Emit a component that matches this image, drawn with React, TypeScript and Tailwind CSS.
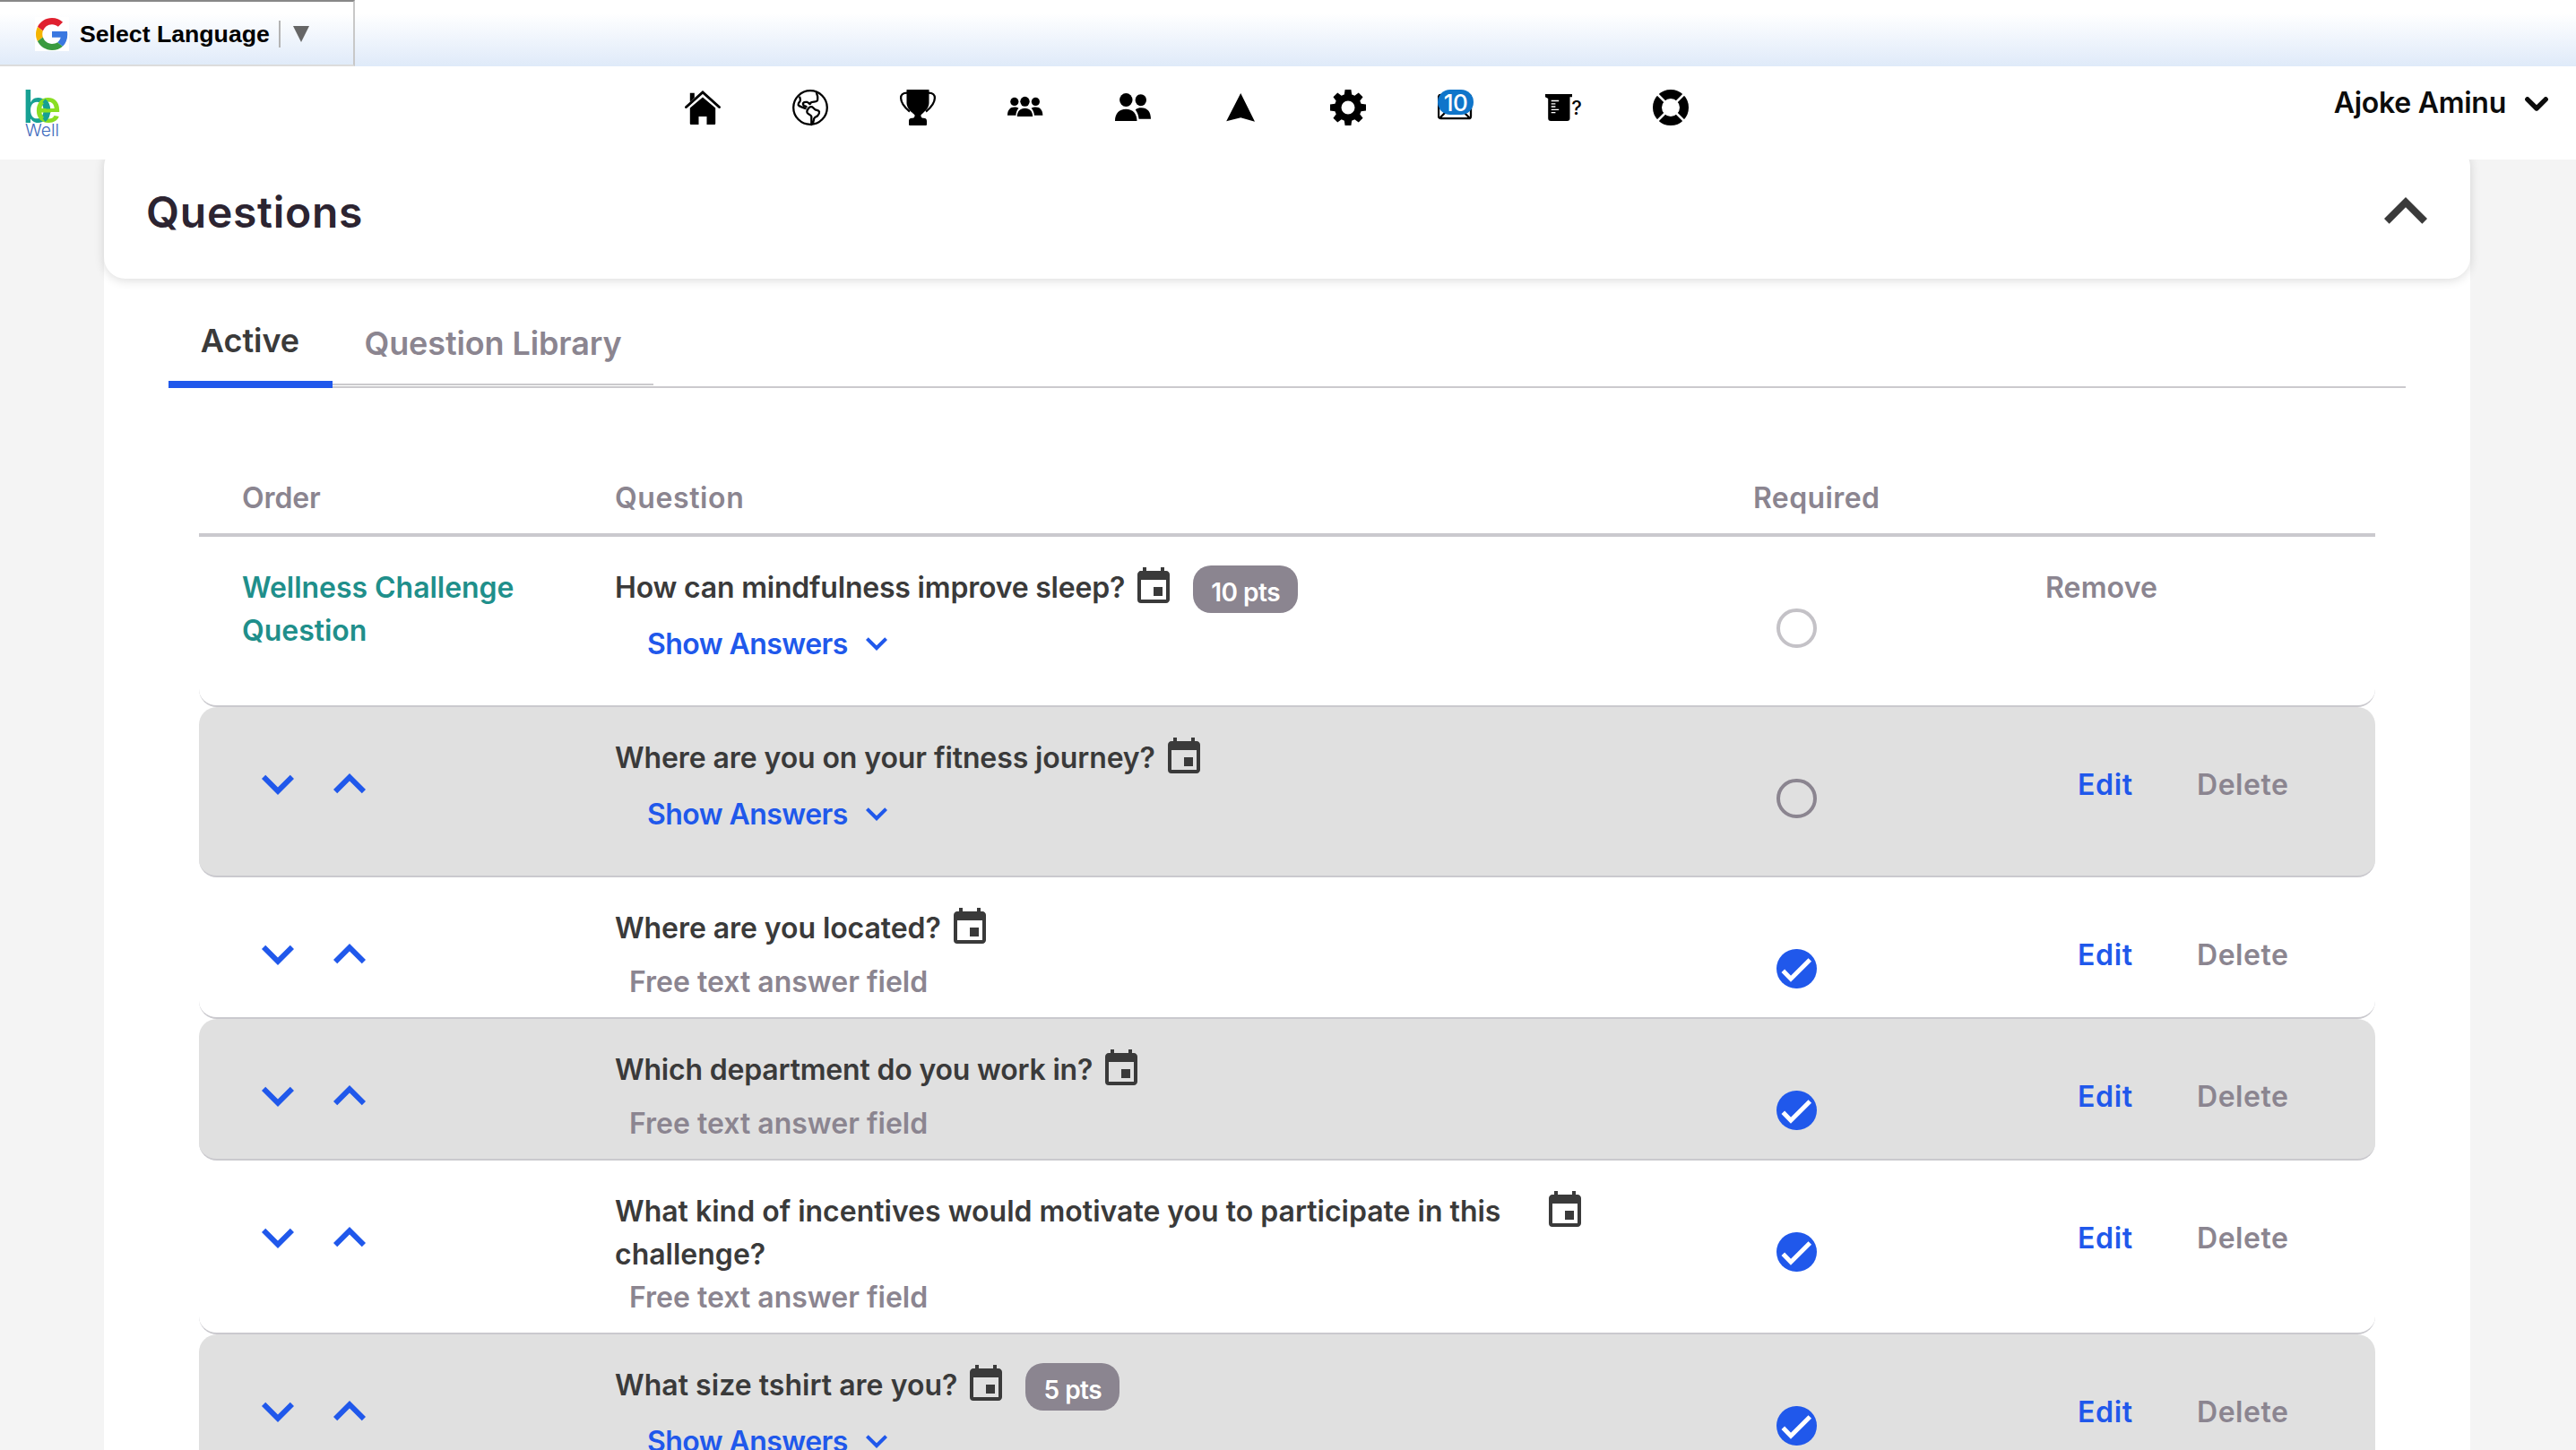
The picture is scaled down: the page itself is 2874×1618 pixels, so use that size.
import type { ReactNode } from "react";
import { MdEvent, MdKeyboardArrowDown, MdKeyboardArrowUp } from "react-icons/md";

type Question = {
  text: string;
  tracking: string;
  height: string;
  shaded?: boolean;
  challenge?: boolean;
  freeText?: boolean;
  required?: boolean;
  points?: string;
};

const questions: Question[] = [
  { text: "How can mindfulness improve sleep?", tracking: "tracking-[-0.2px]", height: "h-[190px]", challenge: true, points: "10 pts" },
  { text: "Where are you on your fitness journey?", tracking: "tracking-[-0.1px]", height: "h-[190px]", shaded: true },
  { text: "Where are you located?", tracking: "tracking-[-0.07px]", height: "h-[158px]", freeText: true, required: true },
  { text: "Which department do you work in?", tracking: "tracking-[-0.19px]", height: "h-[158px]", shaded: true, freeText: true, required: true },
  {
    text: "What kind of incentives would motivate you to participate in this challenge?",
    tracking: "tracking-[0px]",
    height: "h-[194px]",
    freeText: true,
    required: true,
  },
  { text: "What size tshirt are you?", tracking: "tracking-[0.03px]", height: "h-[190px]", shaded: true, required: true, points: "5 pts" },
];

const NavIcon = ({ children }: { children: ReactNode }) => (
  <a href="#" className="block size-10">
    <svg viewBox="0 0 40 40" className="size-10 overflow-visible" fill="#000">
      {children}
    </svg>
  </a>
);

const GoogleLogo = () => (
  <svg viewBox="0 0 48 48" className="size-9">
    <path fill="#e0202f" d="M24 9.5c3.5 0 6.700 1.200 9.200 3.600l6.900-6.900C35.900 2.400 30.500 0 24 0 14.600 0 6.500 5.400 2.600 13.200l8 6.200C12.400 13.700 17.700 9.500 24 9.500z" />
    <path fill="#3b78e0" d="M47 24.500c0-1.600-.2-3.100-.4-4.500H24v9h12.900c-.6 3-2.200 5.500-4.700 7.200l7.700 6C44.400 38 47 31.800 47 24.500z" />
    <path fill="#f4b400" d="M10.500 28.600c-.5-1.500-.8-3-.8-4.600s.3-3.100.8-4.600l-8-6.200C.9 16.500 0 20.100 0 24s.9 7.500 2.600 10.800l7.900-6.200z" />
    <path fill="#3a9a3f" d="M24 48c6.500 0 11.900-2.100 15.900-5.800l-7.700-6c-2.200 1.400-4.900 2.300-8.200 2.300-6.300 0-11.600-4.200-13.500-9.900l-8 6.200C6.500 42.600 14.600 48 24 48z" />
  </svg>
);

const BeWellLogo = () => (
  <svg width="60" height="68" viewBox="-8 -8 60 68" className="overflow-visible font-['Inter',sans-serif]">
    <text y="38" fontSize="51" fontWeight="500">
      <tspan x="-3" fill="#17a093">b</tspan>
      <tspan x="10.500" fill="#8ade22">e</tspan>
    </text>
    <path d="M21 13.200c6.500 5 6.500 17 0 21.800" fill="none" stroke="#17a093" strokeWidth="4.800" />
    <path d="M15 24.500h14" stroke="#8ade22" strokeWidth="4" />
    <text x="0" y="53" fontSize="19" fontWeight="300" fill="#3f6bbd" textLength="38" lengthAdjust="spacingAndGlyphs">Well</text>
  </svg>
);

const LanguageBar = () => (
  <div className="flex h-[74px] shrink-0 bg-gradient-to-b from-white from-20% to-[#dfeaf9]">
    <button className="flex h-[74px] w-[396px] items-center border-t-2 border-r-2 border-b-2 border-t-[#888] border-r-[#c8c8c8] border-b-[#dcdcdc] pt-0.5 pl-[39px] font-['Liberation_Sans',Arial,sans-serif] text-[26.67px] font-bold text-black">
      <span className="flex size-[38px] items-center justify-center bg-white">
        <GoogleLogo />
      </span>
      <span className="ml-3 w-[222px] text-left">Select Language</span>
      <span className="h-[30px] w-0.5 bg-[#b4b4b4]" />
      <svg viewBox="0 0 18 18" className="ml-3.5 size-[18px]">
        <path d="M0 0h18L9 18z" fill="#666" />
      </svg>
    </button>
  </div>
);

const NavBar = () => (
  <header className="relative z-20 flex h-[104px] shrink-0 items-start bg-white">
    <div className="w-[764px] pt-[17px] pl-5">
      <BeWellLogo />
    </div>
    <nav className="flex gap-20 pt-[26px]">
      <NavIcon>
        <path d="M1.500 19.500 20 3l18.500 16.500" fill="none" stroke="#000" strokeWidth="3" strokeLinecap="round" />
        <path d="M5.800 3.700h5V9l-5 4.700zM20 8.500l14.200 12V38a1 1 0 0 1-1 1h-8.700v-9h-9v9H6.800a1 1 0 0 1-1-1V20.500z" />
      </NavIcon>
      <NavIcon>
        <g fill="none" stroke="#000" strokeWidth="2.300" strokeLinejoin="round">
          <circle cx="20" cy="20" r="18.800" />
          <path d="M8.300 7.500c-.3 2.500 1.300 3 .3 5.200-.8 1.500-2.400 2.800-2 4.300.6 1.600 2.600 2 4.400 2.600 1.600.6 3 1.500 4.600 1.400" />
          <path d="M27 2c-.6 2.500 1.200 3.700 1.200 6 0 1.500.4 3.500-.6 4.600-2 1.300-5.200.6-7 1.900-.5.500 0 1.300-.8 1.500-1 0-1.700-1.700-3.100-2-1.500-.2-3.200-.5-4.200.6-1 1-.4 2.300.3 3.200 1 .8 2.700.7 3.200 2" />
          <path d="M21.300 39v-9c-.5-2.200-3.600-2.300-4.700-4.300-.7-1.600.3-3.500 1.500-5 1-1.200 2.600-2 4.200-1.300 1.500.8 2 2.300 3.400 3 1.500.7 4 .7 4.300 2.300.3 1.700-.7 3.300-1.800 4.400-1.200 1.200-3.400 1.600-4 3.200-.6 2 .4 4.400-2.900 6.700z" />
        </g>
      </NavIcon>
      <NavIcon>
        <path d="M7.500 0h25v15c0 5-4.500 9.500-8.500 12.800-1 .9-.5 2.200 0 3 .4.900 1.300 1 2.600 1 2 0 3.400 1.200 3.400 3.200V39a1 1 0 0 1-1 1H11a1 1 0 0 1-1-1v-4c0-2 1.400-3.200 3.400-3.200 1.300 0 2.200-.1 2.600-1 .5-.8 1-2.100 0-3C12 24.500 7.500 20 7.500 15z" />
        <path d="M8 3.600C3 3.600 1 6 1.100 9.500 1.300 16 6 20.500 11 24.500M32 3.600c5 0 7 2.400 6.900 5.900-.2 6.500-4.900 11-9.900 15" fill="none" stroke="#000" strokeWidth="2.300" />
      </NavIcon>
      <NavIcon>
        <circle cx="7.800" cy="13.400" r="4.600" />
        <circle cx="31.400" cy="13.400" r="4.600" />
        <ellipse cx="19.500" cy="13.300" rx="5.200" ry="5.500" />
        <path d="M10.800 30c0-5.500 3.500-9.200 8.700-9.200s8.700 3.700 8.700 9.200zM0 28.700c0-6 3-9.300 7.800-9.300 2 0 3.500.4 4.700 1.400-1.800 2-2.900 4.600-3.100 7.900zM39.400 28.700c0-6-3-9.300-7.800-9.300-2 0-3.800.4-5 1.400 1.900 2 3.100 4.600 3.300 7.900z" />
      </NavIcon>
      <NavIcon>
        <ellipse cx="12.300" cy="11.500" rx="7.200" ry="7.600" />
        <ellipse cx="28.800" cy="11.700" rx="6.200" ry="6.500" />
        <path d="M0 35c0-8.300 4.500-13.300 12.200-13.300S24.500 26.700 24.500 35zM40 32.700c0-7.800-3.700-12.500-10.700-12.500-2.700 0-4.800.6-6.500 2.200 2 2.700 3.400 6 3.800 10.300z" />
      </NavIcon>
      <NavIcon>
        <path d="M20.200 4 36 35.800l-15.800-4.500L4.200 35.300z" />
      </NavIcon>
      <NavIcon>
        <circle cx="20" cy="20" r="11.300" fill="none" stroke="#000" strokeWidth="7.600" />
        {[0, 45, 90, 135, 180, 225, 270, 315].map((angle) => (
          <path key={angle} d="M15.500 7.500 16.600 0h6.800l1.100 7.500z" transform={`rotate(${angle} 20 20)`} />
        ))}
      </NavIcon>
      <a href="#" className="relative block size-10">
        <svg viewBox="0 0 40 40" className="size-10">
          <rect x="1" y="6" width="36" height="26.200" rx="2.500" fill="#fff" stroke="#000" strokeWidth="2.300" />
          <path d="M2 32 12 22M36 32 26 22" stroke="#000" strokeWidth="2.300" />
        </svg>
        <span className="absolute top-0 left-0 flex h-7 w-10 items-center justify-center rounded-[14px] bg-[#0f75ca] pt-0.5 font-['Inter',sans-serif] text-[26px] leading-7 font-medium tracking-[-0.5px] text-white">
          10
        </span>
      </a>
      <NavIcon>
        <path d="M0 5h30v3.300h-2.500V32a3 3 0 0 1-3 3H6.200a3 3 0 0 1-3-3V10L0 8.300z" />
        <path d="M6.700 12.500h8.500M6.700 15.800h4.700M6.700 19h4.700M6.700 22.300h8.500M6.700 25.700h4.700" stroke="#fff" strokeWidth="1.300" />
        <text x="29.300" y="28.200" fontSize="22" fontWeight="500" className="font-['Inter',sans-serif]">?</text>
      </NavIcon>
      <NavIcon>
        <circle cx="20" cy="20" r="15" fill="none" stroke="#000" strokeWidth="10" />
        <path d="m5 5 8.500 8.500M35 5l-8.500 8.500M5 35l8.500-8.500M35 35l-8.500-8.500" stroke="#fff" strokeWidth="2.500" />
      </NavIcon>
    </nav>
    <button className="mr-[31px] ml-auto flex pt-[17px] text-[32px] leading-[48px] font-semibold tracking-[-0.27px] text-[#0c0c0c]">
      Ajoke Aminu
      <svg viewBox="0 0 26 17" className="mt-[17px] ml-[21px] h-[17px] w-[26px]">
        <path d="m2.800 2.800 10.200 10.200L23.200 2.800" fill="none" stroke="#0c0c0c" strokeWidth="5.400" strokeLinecap="round" strokeLinejoin="round" />
      </svg>
    </button>
  </header>
);

const RequiredToggle = ({ checked, disabled }: { checked?: boolean; disabled?: boolean }) => {
  if (checked) {
    return (
      <span className="flex h-11 w-[45px] items-center justify-center rounded-full bg-[#2058eb]">
        <svg viewBox="0 0 45 44" className="h-11 w-[45px]">
          <path d="m7.300 24.300 8.700 9L37.300 12" fill="none" stroke="#fff" strokeWidth="5" />
        </svg>
      </span>
    );
  }
  return (
    <span className={`block h-11 w-[45px] rounded-full border-4 ${disabled ? "border-[#c4c2c7]" : "border-[#8b8590]"}`} />
  );
};

const QuestionRow = ({ question }: { question: Question }) => {
  const { text, tracking, height, shaded, challenge, freeText, required, points } = question;

  return (
    <div
      className={`grid shrink-0 grid-cols-[464px_1272px_325px_1fr] rounded-[20px] border-b-2 border-[#cac9ce] ${height} ${
        shaded ? "bg-[#e0e0e0]" : "bg-white"
      } ${challenge ? "rounded-t-none" : ""}`}
    >
      {challenge ? (
        <div className="w-[400px] pt-[33px] pl-12 tracking-[-0.04px] text-[#1f8f8b]">Wellness Challenge Question</div>
      ) : (
        <div className="flex gap-2 pt-[50px] pl-[52px] text-[#2058eb]">
          <MdKeyboardArrowDown className="size-[72px]" />
          <MdKeyboardArrowUp className="size-[72px]" />
        </div>
      )}

      <div className="pt-[33px]">
        <div className="flex min-h-[60px] items-start text-[#3a3a3a]">
          <p className={`max-w-[1028px] ${tracking}`}>{text}</p>
          <MdEvent className="-mt-px ml-2 size-12 shrink-0" />
          {points && (
            <span className="-mt-px ml-5 h-[53px] rounded-[20px] bg-[#8b8590] px-5 pt-4 text-[28px] leading-none tracking-[-0.5px] text-white">
              {points}
            </span>
          )}
        </div>
        {freeText ? (
          <p className="pl-4 text-[#8b8590]">Free text answer field</p>
        ) : (
          <button className="mt-[3px] ml-9 flex gap-2 tracking-[-0.55px] text-[#2058eb]">
            Show Answers
            <MdKeyboardArrowDown className="-mt-px size-12" />
          </button>
        )}
      </div>

      <div className="pt-20 pl-6">
        <RequiredToggle checked={required} disabled={challenge} />
      </div>

      {challenge ? (
        <div className="-ml-px pt-[33px] tracking-[0.14px] text-[#8b8590]">Remove</div>
      ) : (
        <div className="flex pt-[63px] pl-[35px]">
          <span className="w-[133px] tracking-[0.7px] text-[#2058eb]">Edit</span>
          <span className="tracking-[0.54px] text-[#8b8590]">Delete</span>
        </div>
      )}
    </div>
  );
};

const App = () => {
  return (
    <div className="flex h-screen flex-col overflow-hidden bg-[#f4f4f4] font-['Inter','Noto_Sans',sans-serif] text-[32px] leading-[48px] font-semibold">
      <LanguageBar />
      <NavBar />

      <main className="mx-[116px] w-[2640px]">
        <div className="relative z-10 -mt-4 flex h-[149px] items-center justify-between rounded-[24px] bg-white pr-6 pl-[47px] shadow-[0_2px_12px_rgba(0,0,0,0.14)]">
          <h1 className="text-[48px] leading-[58px] font-semibold tracking-[0.7px] text-[#2c2431]">Questions</h1>
          <MdKeyboardArrowUp className="-mt-px size-24 text-[#3a3a3a]" />
        </div>

        <section className="-mt-6 bg-white pt-6">
          <div className="ml-[72px] flex h-[122px] w-[2496px] items-end border-b-2 border-[#cbcacd] text-[36px]">
            <button className="-mb-0.5 w-[183px] border-b-8 border-[#2058eb] pr-px pb-[21px] tracking-[-0.04px] text-[#3a3a3a]">
              Active
            </button>
            <button className="mb-px w-[358px] border-b-2 border-[#cbcacd] pb-[21px] tracking-[-0.12px] text-[#8b8590]">
              Question Library
            </button>
          </div>

          <div className="mt-[99px] ml-[106px] flex w-[2428px] flex-col">
            <div className="grid grid-cols-[464px_1270px_1fr] border-b-4 border-[#cac9ce] pb-[15px] text-[#8b8590]">
              <span className="pl-12 tracking-[-0.1px]">Order</span>
              <span className="tracking-[0.6px]">Question</span>
              <span className="tracking-[0.4px]">Required</span>
            </div>
            {questions.map((question) => (
              <QuestionRow key={question.text} question={question} />
            ))}
          </div>
        </section>
      </main>
    </div>
  );
};

export default App;
